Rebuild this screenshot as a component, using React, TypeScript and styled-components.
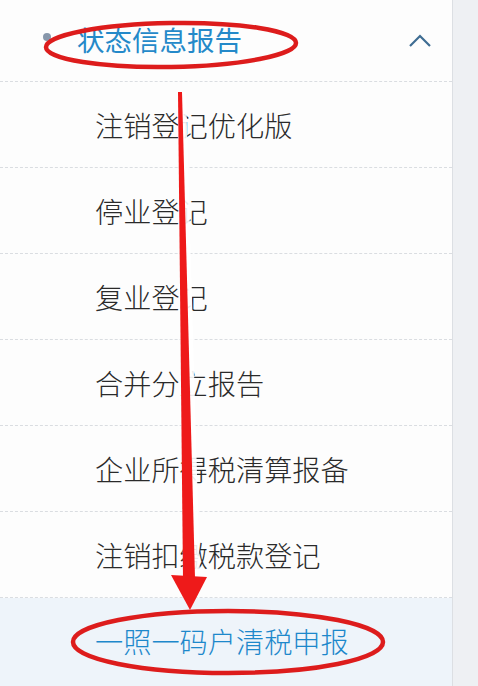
import React from 'react';
import styled, { createGlobalStyle } from 'styled-components';

const GlobalStyle = createGlobalStyle`
  html, body {
    margin: 0;
    padding: 0;
    background: #eef0f3;
    font-family: "Noto Sans CJK SC", "Noto Sans", sans-serif;
  }
`;

const Page = styled.div`
  position: relative;
  display: flex;
  width: 478px;
  height: 686px;
  overflow: hidden;
`;

const Panel = styled.div`
  width: 452px;
  background: #fdfdfd;
  border-right: 1px solid #dcdfe3;
  display: flex;
  flex-direction: column;
`;

const Strip = styled.div`
  flex: 1;
  background: #eef0f3;
`;

const Header = styled.div`
  height: 82px;
  display: flex;
  align-items: center;
  padding: 0 20px 0 43px;
  border-bottom: 1px dashed #dadde1;
  box-sizing: border-box;
`;

const Dot = styled.span`
  width: 8px;
  height: 8px;
  border-radius: 50%;
  background: #8797ab;
  margin-top: -8px;
`;

const Title = styled.span`
  margin-left: 26px;
  font-size: 27.5px;
  color: #2489c9;
  flex: 1;
  margin-top: -4px;
`;

const Item = styled.div<{ active?: boolean }>`
  height: 86px;
  display: flex;
  align-items: center;
  padding-left: 95px;
  box-sizing: border-box;
  font-size: 28.2px;
  font-weight: 300;
  color: ${p => (p.active ? '#1d88cb' : '#2a2a2a')};
  background: ${p => (p.active ? '#eef4fa' : 'transparent')};
  border-bottom: ${p => (p.active ? 'none' : '1px dashed #dadde1')};
  flex: ${p => (p.active ? 1 : 'none')};
  padding-bottom: ${p => (p.active ? '4px' : '0')};
`;

const Overlay = styled.svg`
  position: absolute;
  left: 0;
  top: 0;
  pointer-events: none;
`;

const items = ['注销登记优化版', '停业登记', '复业登记', '合并分立报告', '企业所得税清算报备', '注销扣缴税款登记'];

export default function App() {
  return (
    <>
      <GlobalStyle />
      <Page>
        <Panel>
          <Header>
            <Dot />
            <Title>状态信息报告</Title>
            <svg width="24" height="14" viewBox="0 0 24 14">
              <path d="M2 12 L12 2 L22 12" fill="none" stroke="#3f6d93" strokeWidth="2.2" />
            </svg>
          </Header>
          {items.map(t => (
            <Item key={t}>{t}</Item>
          ))}
          <Item active>一照一码户清税申报</Item>
        </Panel>
        <Strip />
        <Overlay width="478" height="686" viewBox="0 0 478 686">
          <ellipse cx="171" cy="45" rx="125" ry="22" fill="none" stroke="#dd1c1c" strokeWidth="4.5" transform="rotate(-1 171 45)" />
          <ellipse cx="228" cy="642" rx="155" ry="31" fill="none" stroke="#dd1c1c" strokeWidth="4.5" />
          <polygon points="178,92 186,92 200,578 183,578" fill="#ffffff" opacity="0.9" />
          <polygon points="178,92 182,92 195,578 183,578" fill="#ee1a1a" />
          <polygon points="171,575 207,577 190,610" fill="#ee1a1a" />
        </Overlay>
      </Page>
    </>
  );
}
